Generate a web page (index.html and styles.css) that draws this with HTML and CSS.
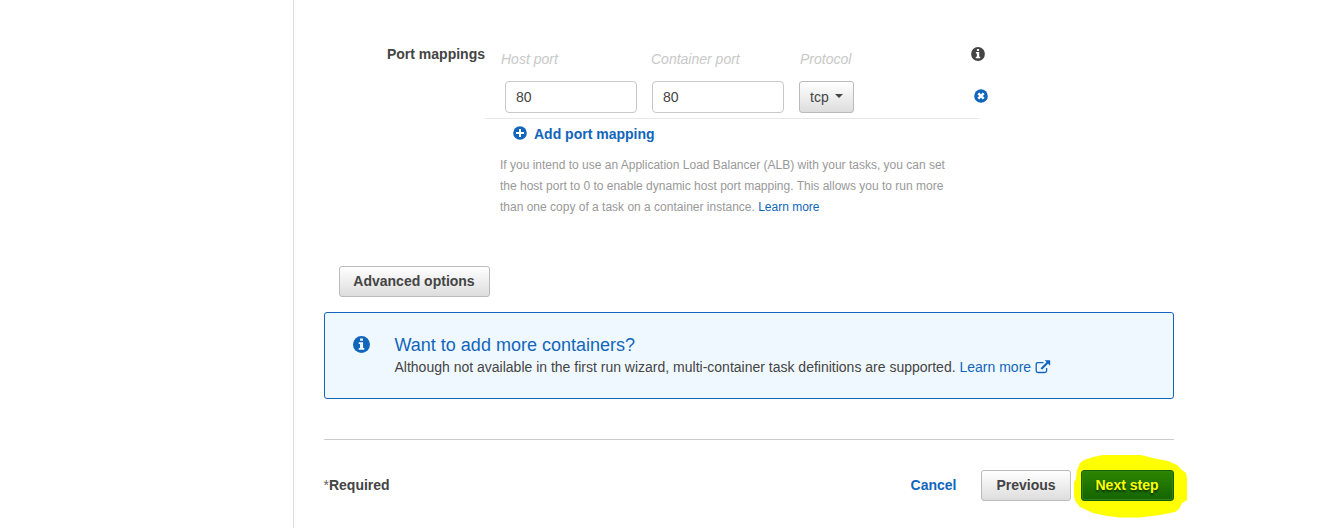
FILE: index.html
```
<!DOCTYPE html>
<html lang="en">
<head>
<meta charset="utf-8">
<title>Container definition</title>
<link rel="stylesheet" href="styles.css">
</head>
<body>
<div class="layout">
  <aside class="sidebar"></aside>
  <main class="content">
    <section class="ports">
      <div class="ports-label">Port mappings</div>
      <div class="ports-body">
        <div class="ports-head"><span>Host port</span><span>Container port</span><span>Protocol</span></div>
        <div class="ports-row">
          <input class="field" type="text" value="80" aria-label="Host port">
          <input class="field" type="text" value="80" aria-label="Container port">
          <button class="select" type="button">tcp<span class="caret"></span></button>
        </div>
        <a class="add"><svg class="icon" viewBox="0 0 14 14"><circle cx="7" cy="7" r="6.8" fill="currentColor"/><path d="M7 3v8M3 7h8" stroke="#fff" stroke-width="2"/></svg>Add port mapping</a>
        <p class="help">If you intend to use an Application Load Balancer (ALB) with your tasks, you can set<br>the host port to 0 to enable dynamic host port mapping. This allows you to run more<br>than one copy of a task on a container instance. <a>Learn more</a></p>
      </div>
      <div class="ports-icons">
        <svg class="icon info" viewBox="0 0 14 14"><circle cx="7" cy="7" r="6.9" fill="currentColor"/><path d="M5.9 2.1h2.2v1.8H5.9zM4.9 5.1h3.3v4.7h1v1.4H4.8V9.8h1.1V6.5h-1z" fill="#fff"/></svg>
        <svg class="icon remove" viewBox="0 0 14 14"><circle cx="7" cy="7" r="6.8" fill="currentColor"/><path d="M4.3 4.3l5.4 5.4M9.7 4.3L4.3 9.7" stroke="#fff" stroke-width="2.5"/></svg>
      </div>
    </section>
    <button class="btn advanced" type="button">Advanced options</button>
    <section class="notice">
      <svg class="notice-icon" viewBox="0 0 14 14"><circle cx="7" cy="7" r="7" fill="currentColor"/><path d="M5.8 2h2.4v1.9H5.8zM4.7 5.1h3.6v4.7h1v1.5H4.7V9.8h1.1V6.6H4.7z" fill="#f0f8ff"/></svg>
      <div>
        <h2 class="notice-title">Want to add more containers?</h2>
        <p class="notice-text">Although not available in the first run wizard, multi-container task definitions are supported. <a>Learn more<svg class="external" viewBox="0 0 16 14"><path d="M8.5 2.6H3Q1.2 2.6 1.2 4.4v6.3q0 1.8 1.8 1.8h6.8q1.8 0 1.8-1.8V8" fill="none" stroke="currentColor" stroke-width="1.3"/><path d="M6.3 8.9l6.4-6.3" stroke="currentColor" stroke-width="2.1"/><path d="M9.6.2H15.2v5.6z" fill="currentColor"/></svg></a></p>
      </div>
    </section>
    <footer class="footer">
      <div class="required"><span class="star">*</span>Required</div>
      <a class="cancel">Cancel</a>
      <button class="btn" type="button">Previous</button>
      <div class="next">
        <svg class="highlight" viewBox="0 0 114 63"><path d="M6 8L10 5L19 2L29 0H67L83 4L94 6L103 10L108 15L112 18L113 24V45L108 48L105 54L101 57L86 60L66 62.5H46L33 61L19 58L6 52L2 47L0 42V27L2 24L3 15Z" fill="#ff0"/></svg>
        <button class="btn primary" type="button">Next step</button>
      </div>
    </footer>
  </main>
</div>
</body>
</html>
```
FILE: styles.css
```
* { box-sizing: border-box; }
body { margin: 0; background: #fff; color: #444; font: 14px/20px "Liberation Sans", Arial, sans-serif; }
a { color: #1166bb; text-decoration: none; }
button, input { font: inherit; color: inherit; margin: 0; }
.layout { display: flex; height: 528px; overflow: hidden; }
.sidebar { width: 294px; flex: none; border-right: 1px solid #ddd; }
.content { width: 880px; padding: 44px 0 0 30px; }
.ports { display: flex; height: 222px; }
.ports-label { width: 161px; text-align: right; font-weight: bold; }
.ports-body { width: 494px; flex: none; }
.ports-head { display: grid; grid-template-columns: 150px 149px auto; padding: 5px 0 0 16px; color: #c8c8c8; font-style: italic; }
.ports-row { display: flex; gap: 15px; padding: 12px 0 5px 20px; border-bottom: 1px solid #e8e8e8; }
.field { width: 132px; height: 32px; padding: 0 10px; border: 1px solid #c8c8c8; border-radius: 4px; background: #fff; }
.select { display: flex; align-items: center; gap: 6px; width: 55px; height: 32px; padding: 0 10px; border: 1px solid #bbb; border-radius: 3px; background: linear-gradient(#fff, #ddd); }
.caret { border: 4px solid transparent; border-top-color: #444; border-bottom: 0; margin-top: -2px; }
.icon { display: block; width: 14px; height: 14px; flex: none; }
.add { display: flex; align-items: center; gap: 7px; padding: 5px 0 0 28px; font-weight: bold; }
.add .icon { margin-top: -2px; }
.help { margin: 11px 0 0 15px; color: #999; font-size: 12px; line-height: 21px; white-space: nowrap; }
.ports-icons { padding-top: 3px; margin-left: -8px; }
.info { color: #444; }
.remove { color: #1166bb; margin: 28px 0 0 3px; }
.btn { height: 31px; padding: 0 14px; border: 1px solid #bbb; border-radius: 3px; background: linear-gradient(#fff, #ddd); font-weight: bold; line-height: 29px; white-space: nowrap; }
.advanced { display: block; width: 151px; margin-left: 15px; padding: 0 1px 0 0; }
.notice { display: flex; gap: 25px; width: 850px; height: 87px; margin-top: 15px; padding: 22px 27.5px; border: 1px solid #1166bb; border-radius: 3px; background: #f0f8ff; }
.notice-icon { width: 17px; height: 17px; margin-top: 1px; color: #1166bb; }
.notice-title { margin: 0; color: #1166bb; font-size: 18px; font-weight: normal; line-height: 20px; }
.notice-text { margin: 2px 0 0; white-space: nowrap; }
.external { width: 16px; height: 14px; margin-left: 4px; vertical-align: -2px; }
.footer { display: flex; align-items: flex-start; margin-top: 40px; padding-top: 30px; border-top: 1px solid #ccc; font-weight: bold; }
.required, .cancel { line-height: 30px; }
.required { flex: 1; margin-left: -0.5px; }
.star { color: #666; font-weight: normal; }
.cancel { margin-right: 24.5px; }
.footer .btn { width: 90px; padding: 0; }
.next { position: relative; margin-left: 10px; }
.highlight { position: absolute; left: -7px; top: -15px; width: 114px; height: 63px; }
.footer .primary { position: relative; display: block; width: 93px; padding-right: 1px; border-color: #175e00; background: linear-gradient(#2d8500, #156500); color: #ff0; text-shadow: 0 2px 2px #083000; box-shadow: inset 0 0 0 1px #318414; }
```
